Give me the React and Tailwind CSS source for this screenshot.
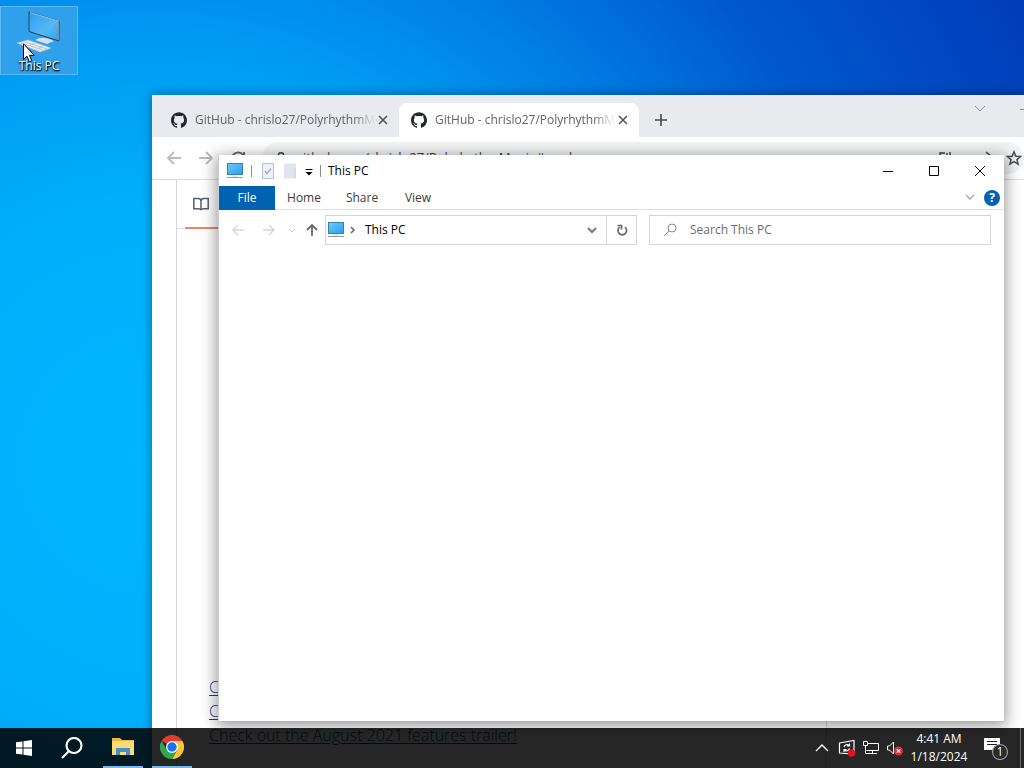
import { SiGithub } from 'react-icons/si';

const tabs = [
  { id: 1, title: 'GitHub - chrislo27/PolyrhythmM', active: false },
  { id: 2, title: 'GitHub - chrislo27/PolyrhythmM', active: true },
];

function MonitorIcon() {
  return (
    <svg className="w-4 h-4 shrink-0" viewBox="0 0 16 16">
      <defs>
        <linearGradient id="screen" x1="0" y1="0" x2="1" y2="1">
          <stop offset="0" stopColor="#6ccbfb" />
          <stop offset="1" stopColor="#2a9df0" />
        </linearGradient>
      </defs>
      <rect x="0.5" y="0.5" width="15" height="11" fill="url(#screen)" stroke="#3b7fa8" />
      <rect x="5" y="12" width="6" height="2" fill="#e3edf3" />
      <rect x="0" y="14" width="16" height="1" fill="#8c9aa3" />
    </svg>
  );
}

function Stroke({ d, size = 'w-4 h-4', box = 16, width = 1, className = '' }) {
  return (
    <svg className={`${size} shrink-0 ${className}`} viewBox={`0 0 ${box} ${box}`} fill="none" stroke="currentColor" strokeWidth={width}>
      <path d={d} />
    </svg>
  );
}

function DesktopIcon() {
  return (
    <button className="absolute left-0 top-1.5 w-[78px] h-[69px] flex flex-col items-center justify-end border border-[#5cbaf5] bg-[#2fa0ec] text-white text-xs">
      <svg className="w-12 h-12 shrink-0" viewBox="0 0 48 48">
        <defs>
          <linearGradient id="glass" x1="0" y1="0" x2="1" y2="1">
            <stop offset="0" stopColor="#2c9fee" />
            <stop offset="0.6" stopColor="#55b8f5" />
            <stop offset="1" stopColor="#2aa2ee" />
          </linearGradient>
        </defs>
        <path d="M14 2 L44 11 V31 L14 21.500 Z" fill="url(#glass)" stroke="#24415a" />
        <path d="M15 2.500 L44 11.200" fill="none" stroke="#b5e2fa" strokeWidth="0.8" />
        <path d="M43.500 11.500 V30.500" fill="none" stroke="#9c8f96" strokeWidth="0.8" />
        <path d="M20 30 Q28 25 39 31 L32 34 Z" fill="#d5e2ec" />
        <path d="M2 33 L13 30 L36 38 L25 42 Z" fill="#e8e8e8" stroke="#b9c4cc" strokeWidth="0.6" />
        <path d="M6 33 L28 40 M10 32 L32 39 M14 36 L20 33 M22 39 L28 36" stroke="#a9b3bb" strokeWidth="0.6" />
      </svg>
      <span className="leading-4 [text-shadow:0_1px_2px_#000,1px_1px_1px_#000]">This PC</span>
    </button>
  );
}

function Pointer() {
  return (
    <svg className="absolute left-[23px] top-[43px] w-3 h-5 pointer-events-none" viewBox="0 0 12 20">
      <path d="M0.500 0.800 V16.500 L4 13.200 L6.300 18.800 L8.800 17.700 L6.500 12.300 H11.300 Z" fill="#fff" stroke="#000" />
    </svg>
  );
}

function Tab({ title, active }) {
  return (
    <div className={`flex items-center w-60 h-[34px] pl-3 pr-2 rounded-t-lg ${active ? 'bg-white' : ''}`}>
      <SiGithub className="w-4 h-4 shrink-0 text-[#24292f]" />
      <span className="flex-1 ml-2 overflow-hidden whitespace-nowrap text-xs text-[#5f6368] [mask-image:linear-gradient(to_right,#000_88%,transparent)]">
        {title}
      </span>
      <button aria-label="Close tab" className="text-[#50545a]">
        <Stroke d="M4 4 L12 12 M12 4 L4 12" width={1.6} />
      </button>
    </div>
  );
}

function Browser() {
  return (
    <section className="absolute left-[152px] top-[95px] right-0 bottom-0 flex flex-col bg-white overflow-hidden shadow-[0_0_10px_rgba(0,0,0,0.4)]">
      <header className="flex h-[42px] shrink-0 items-end bg-[#e8eaed] pl-[7px]">
        {tabs.map((tab) => (
          <Tab key={tab.id} title={tab.title} active={tab.active} />
        ))}
        <button aria-label="New tab" className="ml-[13px] mb-2 text-[#45494d]">
          <Stroke d="M9 3 V15 M3 9 H15" box={18} width={1.6} size="w-[18px] h-[18px]" />
        </button>
        <div className="flex flex-1 justify-end mb-5 gap-8 text-[#8b8d90]">
          <Stroke d="M3 5 L8 10 L13 5" />
          <Stroke d="M0 8.500 H10" className="-mr-3" />
        </div>
      </header>

      <div className="flex h-[43px] shrink-0 items-center gap-4 border-b border-[#dcdcde] pl-3.5 text-[#5f6368]">
        <Stroke d="M15 8 H2 M8 2 L2 8 L8 14" width={1.8} className="text-[#b9babd]" />
        <Stroke d="M1 8 H14 M8 2 L14 8 L8 14" width={1.8} className="text-[#b9babd]" />
        <Stroke d="M13 5 A6 6 0 1 0 14 9 M14 2 V6 H10" width={1.8} />
        <div className="flex flex-1 h-8 items-center rounded-full bg-[#f1f3f4] pl-3 pr-2.5 gap-2 text-[13px] text-[#3c4043]">
          <Stroke d="M5 7 V5 a3 3 0 0 1 6 0 V7 M3 7 H13 V14 H3 Z" width={1.6} size="w-3.5 h-3.5" />
          <span className="flex-1">github.com/chrislo27/PolyrhythmMania#readme</span>
          <Stroke d="M2 14 V3 H7 M9 3 V8 M12 2 V8" width={1.4} />
          <Stroke d="M8 2 L13 6 L8 10 M13 6 H4 V13" width={1.4} className="ml-4" />
          <svg className="w-4 h-4 ml-1 -mr-2" viewBox="0 0 18 18" fill="none" stroke="#4a4d51" strokeWidth="1.700">
            <path d="M9 2 L11 7 L16.500 7.300 L12.300 10.800 L13.700 16 L9 13.100 L4.300 16 L5.700 10.800 L1.500 7.300 L7 7 Z" />
          </svg>
        </div>
      </div>

      <main className="flex flex-1 flex-col ml-6 mr-[197px] border-x border-[#d5d8db]">
        <div className="flex h-[49px] items-center border-b border-[#dcdfe2] pl-4 text-[#57606a]">
          <svg className="w-4 h-4" viewBox="0 0 16 16" fill="none" stroke="currentColor" strokeWidth="1.500">
            <path d="M0.800 2.500 H5 Q8 2.500 8 5 V14 Q7.500 12.800 5.500 12.800 H0.800 Z M15.200 2.500 H11 Q8 2.500 8 5 V14 Q8.500 12.800 10.500 12.800 H15.200 Z" />
          </svg>
        </div>
        <div className="w-20 h-0.5 ml-2 -mt-0.5 shrink-0 bg-[#f08473]" />
        <div className="mt-auto mb-[21px] ml-8 flex flex-col items-start text-base leading-6 font-light text-[#0b3f9c] underline underline-offset-2">
          <a href="#june">Check out the June 2021 features trailer!</a>
          <a href="#july">Check out the July 2021 features trailer!</a>
          <a href="#august">Check out the August 2021 features trailer!</a>
        </div>
      </main>
    </section>
  );
}

function TitleBar() {
  return (
    <header className="flex h-[31px] shrink-0 items-center pl-2 pr-px">
      <MonitorIcon />
      <span className="w-px h-3 mx-2 bg-[#8d8d8d]" />
      <button aria-label="Properties">
        <svg className="w-4 h-4" viewBox="0 0 16 16">
          <rect x="2.500" y="0.500" width="11" height="15" fill="#eef1f8" stroke="#b7bfd3" />
          <path d="M5 8 L7 10.500 L11 5.500" fill="none" stroke="#a5aec6" strokeWidth="1.500" />
        </svg>
      </button>
      <button aria-label="New folder" className="ml-1.5">
        <svg className="w-4 h-4" viewBox="0 0 16 16">
          <path d="M2 0.500 H14 V15.500 H2 Z" fill="#dfe4f1" />
          <path d="M13 5 V15" stroke="#c9d1e4" />
        </svg>
      </button>
      <button aria-label="Customize toolbar" className="ml-1 text-black">
        <svg className="w-3.5 h-4" viewBox="0 0 14 16">
          <path d="M3.500 6.500 H10.500" stroke="#000" />
          <path d="M3.500 9 H10.500 L7 12.500 Z" />
        </svg>
      </button>
      <span className="w-px h-3 ml-1 mr-[7px] bg-[#8d8d8d]" />
      <h1 className="flex-1 text-xs text-black">This PC</h1>
      <button aria-label="Minimize" className="flex w-[46px] h-full items-center justify-center">
        <Stroke d="M0 5.500 H10" box={10} size="w-2.5 h-2.5" />
      </button>
      <button aria-label="Maximize" className="flex w-[46px] h-full items-center justify-center">
        <Stroke d="M0.500 0.500 H9.500 V9.500 H0.500 Z" box={10} size="w-2.5 h-2.5" />
      </button>
      <button aria-label="Close" className="flex w-[46px] h-full items-center justify-center">
        <Stroke d="M0 0 L10 10 M10 0 L0 10" box={10} size="w-2.5 h-2.5" />
      </button>
    </header>
  );
}

function Explorer() {
  return (
    <section className="absolute left-[218px] top-[155px] right-5 bottom-[47px] flex flex-col bg-white border-l border-[#d0d0d0] shadow-[0_3px_14px_2px_rgba(0,0,0,0.4)]">
      <TitleBar />

      <nav className="flex h-6 shrink-0 items-center border-b border-[#e0e0e2] text-xs text-[#3b3b3b]">
        <button className="w-14 h-6 bg-[#0063b1] text-white">File</button>
        <button className="w-[58px] h-6">Home</button>
        <button className="w-[58px] h-6">Share</button>
        <button className="w-[54px] h-6">View</button>
        <div className="flex flex-1 items-center justify-end gap-2 pr-1">
          <Stroke d="M2 3 L6 7 L10 3" box={12} size="w-3 h-3" width={1.3} className="text-[#a5a5a5]" />
          <button aria-label="Help" className="w-4 h-4 rounded-full bg-[#0063b1] text-white text-xs leading-4 font-bold">?</button>
        </div>
      </nav>

      <div className="flex shrink-0 items-center pl-3 pr-[13px] py-[5px] text-xs">
        <Stroke d="M13 8 H2 M7 3 L2 8 L7 13" width={1.4} className="text-[#d6d6d6]" />
        <Stroke d="M2 8 H13 M8 3 L13 8 L8 13" width={1.4} className="ml-3.5 text-[#d6d6d6]" />
        <Stroke d="M2 4 L5 7 L8 4" box={10} size="w-2.5 h-2.5" className="ml-2.5 text-[#cfcfcf]" />
        <Stroke d="M8 14 V3 M3 8 L8 3 L13 8" width={1.8} className="ml-[7px] text-[#6b6b6b]" />
        <div className="grid flex-1 grid-cols-[312fr_342fr] gap-3 ml-[5px]">
          <div className="flex h-[30px] border border-[#d5d5d5]">
            <div className="flex flex-1 items-center pl-0.5 pr-2">
              <MonitorIcon />
              <Stroke d="M3 2 L6 5 L3 8" box={10} size="w-2.5 h-2.5" width={1.5} className="ml-1 text-[#666]" />
              <span className="flex-1 ml-[7px] text-black">This PC</span>
              <Stroke d="M2 4 L6 8 L10 4" box={12} size="w-3 h-3" width={2} className="text-[#777]" />
            </div>
            <button aria-label="Refresh" className="flex w-[30px] items-center justify-center border-l border-[#d5d5d5] text-[#666]">
              <Stroke d="M10 4.200 A4.300 4.300 0 1 1 4.500 4.200 M2.500 2.500 H6.500 V6.500" box={14} size="w-3.5 h-3.5" width={1.7} />
            </button>
          </div>
          <label className="flex h-[30px] items-center border border-[#d5d5d5] pl-3">
            <Stroke d="M14 6 a4 4 0 1 1 -8 0 a4 4 0 1 1 8 0 M7 9 L2 14" className="text-[#8a8a8a]" />
            <input aria-label="Search" placeholder="Search This PC" className="flex-1 min-w-0 ml-3 outline-none placeholder:text-[#6d6d6d]" />
          </label>
        </div>
      </div>
    </section>
  );
}

function Taskbar() {
  return (
    <footer className="absolute inset-x-0 bottom-0 flex h-10 items-center bg-black/85 text-white">
      <button aria-label="Start" className="flex w-12 h-full items-center justify-center">
        <svg className="w-4 h-4" viewBox="0 0 16 16" fill="#fff">
          <path d="M0 2.300 L6.500 1.400 V7.500 H0 Z M7.500 1.200 L16 0 V7.500 H7.500 Z M0 8.500 H6.500 V14.600 L0 13.700 Z M7.500 8.500 H16 V16 L7.500 14.800 Z" />
        </svg>
      </button>
      <button aria-label="Search" className="flex w-12 h-full items-center justify-center">
        <svg className="w-[22px] h-[22px]" viewBox="0 0 22 22" fill="none" stroke="#fff" strokeWidth="2.200">
          <circle cx="13" cy="8.500" r="7.500" />
          <path d="M8 14 L1 21" />
        </svg>
      </button>
      <button aria-label="File Explorer" className="flex w-10 h-full ml-[7px] items-center justify-center border-b-2 border-[#76b9ed]">
        <svg className="w-[22px] h-[22px]" viewBox="0 0 22 22">
          <path d="M0 2 H8 L10 4 H22 V19 H0 Z" fill="#f0b93c" />
          <path d="M0 5 H22 V19 H0 Z" fill="#fbdb78" />
          <path d="M4 19 V12 H18 V19 H14 V16 H8 V19 Z" fill="#3f93c4" />
        </svg>
      </button>
      <button aria-label="Google Chrome" className="flex w-10 h-full ml-[9px] items-center justify-center border-b-2 border-[#76b9ed]">
        <svg className="w-6 h-6" viewBox="0 0 24 24">
          <path d="M12 12 L1.600 6 A12 12 0 0 1 22.400 6 Z" fill="#e33b2e" />
          <path d="M12 6 H22.400 A12 12 0 0 1 12 24 L17.200 15 Z" fill="#fcc934" />
          <path d="M1.600 6 L6.800 15 L12 18 L17.200 15 L12 24 A12 12 0 0 1 1.600 6 Z" fill="#2da94f" />
          <circle cx="12" cy="12" r="6" fill="#fff" />
          <circle cx="12" cy="12" r="4.700" fill="#1a73e8" />
        </svg>
      </button>

      <div className="flex flex-1 h-full items-center justify-end">
        <Stroke d="M2 11 L8 5 L14 11" width={1.4} />
        <svg className="w-[18px] h-[18px] ml-2" viewBox="0 0 18 18" fill="none" stroke="#fff" strokeWidth="1.200">
          <path d="M1.500 4 L16 1.500 V15 L1.500 14 Z" />
          <path d="M6 8 A3 3 0 0 1 11 6.500 M11.500 4.500 V7 H9 M11.500 9.500 A3 3 0 0 1 6.500 11 M6 13 V10.500 H8.500" />
          <circle cx="13.500" cy="14" r="3.800" fill="#e81123" stroke="none" />
        </svg>
        <svg className="w-[18px] h-4 ml-1.5" viewBox="0 0 18 16" fill="none" stroke="#fff">
          <path d="M5 3.500 H16.500 V10.500 H4.500 M10.500 10.500 V13.500 M6 13.500 H15" />
          <path d="M1.500 1.500 H5.500 V5.500 H1.500 Z M3.500 5.500 V13.500 H6" />
        </svg>
        <svg className="w-[18px] h-4 ml-1.5" viewBox="0 0 18 16" fill="none" stroke="#fff">
          <path d="M1.500 6 H3.500 L7.500 2 V14 L3.500 10 H1.500 Z" />
          <circle cx="12.500" cy="11" r="4.500" fill="#d13438" stroke="none" />
          <path d="M10.800 9.300 L14.200 12.700 M14.200 9.300 L10.800 12.700" strokeWidth="1.200" />
        </svg>
        <time className="w-[70px] text-center text-xs leading-[18px]">
          <span className="block">4:41 AM</span>
          <span className="block">1/18/2024</span>
        </time>
        <button aria-label="Notifications" className="ml-2.5">
          <svg className="w-6 h-6" viewBox="0 0 24 24">
            <path d="M0 2 H16 V14 H12 V18 L8 14 H0 Z" fill="#fff" />
            <path d="M3 5.500 H13 M3 8.500 H13" stroke="#222" />
            <circle cx="16" cy="16" r="7.500" strokeWidth="1.200" fill="#2b2b2b" stroke="#999" />
            <text x="16" y="20" fill="#fff" fontSize="12" textAnchor="middle">1</text>
          </svg>
        </button>
        <span className="w-px h-full ml-3 mr-[3px] bg-[#666]" />
      </div>
    </footer>
  );
}

export default function App() {
  return (
    <div className="relative h-screen overflow-hidden font-['Open_Sans','Noto_Sans',sans-serif] bg-[radial-gradient(circle_at_15%_60%,#00b6ff_0%,#00b0fc_25%,#009cf4_42%,#0084e7_54%,#0058ce_75%,#003cb8_100%)]">
      <DesktopIcon />
      <Pointer />
      <Browser />
      <Explorer />
      <Taskbar />
    </div>
  );
}
